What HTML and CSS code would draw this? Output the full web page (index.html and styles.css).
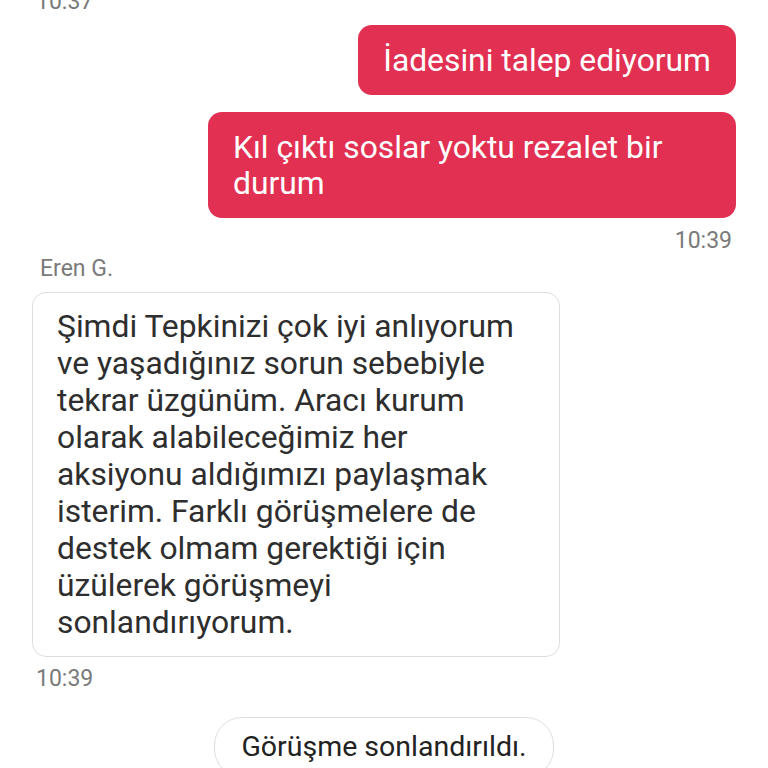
FILE: index.html
```html
<!DOCTYPE html>
<html lang="tr">
<head>
<meta charset="utf-8">
<link rel="stylesheet" href="styles.css">
</head>
<body>
<div class="chat">
  <div class="time time-left time-top">10:37</div>
  <div class="bubble mine b1">İadesini talep ediyorum</div>
  <div class="bubble mine b2">Kıl çıktı soslar yoktu rezalet bir durum</div>
  <div class="time time-right">10:39</div>
  <div class="sender">Eren G.</div>
  <div class="bubble theirs">Şimdi Tepkinizi çok iyi anlıyorum ve yaşadığınız sorun sebebiyle tekrar üzgünüm. Aracı kurum olarak alabileceğimiz her aksiyonu aldığımızı paylaşmak isterim. Farklı görüşmelere de destek olmam gerektiği için üzülerek görüşmeyi sonlandırıyorum.</div>
  <div class="time time-left t3">10:39</div>
  <div class="system">Görüşme sonlandırıldı.</div>
</div>
</body>
</html>
```
FILE: styles.css
```css
html, body {
  margin: 0;
  padding: 0;
  background: #ffffff;
  height: 768px;
  overflow: hidden;
}
.chat {
  display: flex;
  flex-direction: column;
  padding: 0 32px;
  font-family: Roboto, "Noto Sans", sans-serif;
}
.time {
  font-size: 23px;
  color: #7a7a7a;
  line-height: 26px;
}
.time-top {
  margin-top: -11px;
}
.time-left {
  align-self: flex-start;
  padding-left: 4px;
}
.time-right {
  align-self: flex-end;
  padding-right: 4px;
  margin-top: 10px;
}
.bubble {
  font-size: 31.8px;
  line-height: 36px;
  border-radius: 14px;
  padding: 17px 25px;
  max-width: 478px;
  box-sizing: content-box;
}
.mine {
  align-self: flex-end;
  background: #e13051;
  color: #ffffff;
}
.b1 {
  margin-top: 10px;
}
.b2 {
  margin-top: 17px;
}
.sender {
  font-size: 23px;
  color: #7a7a7a;
  line-height: 24px;
  padding-left: 8px;
  margin-top: 3px;
}
.theirs {
  align-self: flex-start;
  background: #ffffff;
  color: #2e2e2e;
  border: 1px solid #dedede;
  line-height: 37px;
  padding: 15px 24px 15px;
  margin-top: 11px;
}
.t3 {
  margin-top: 9px;
}
.system {
  align-self: center;
  margin-top: 25px;
  font-size: 28.5px;
  color: #222222;
  border: 1px solid #dedede;
  border-radius: 28px;
  padding: 12px 26px;
  line-height: 34px;
}
```
